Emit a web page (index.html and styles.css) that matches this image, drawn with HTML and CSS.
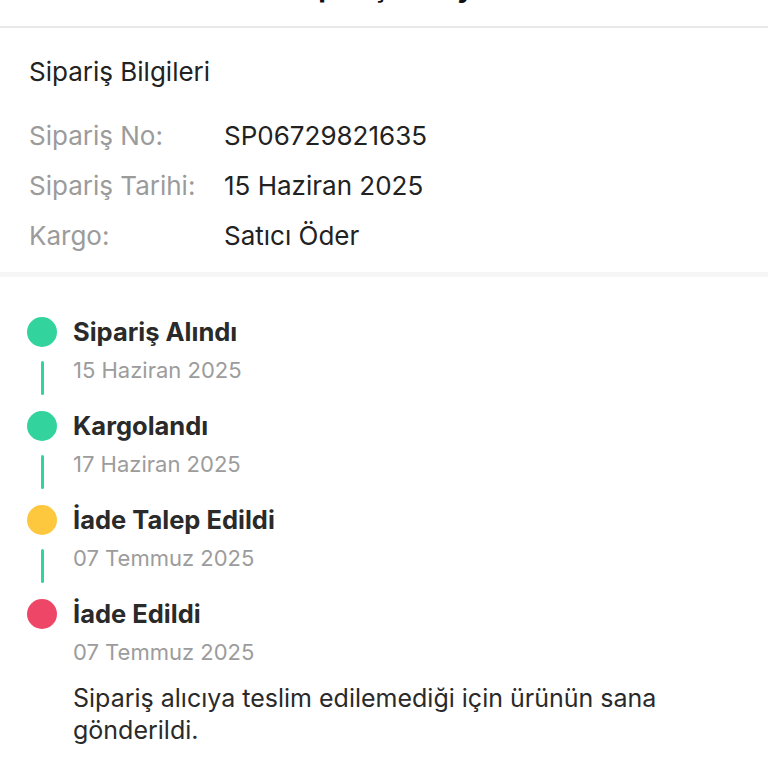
FILE: index.html
```html
<!DOCTYPE html>
<html lang="tr">
<head>
<meta charset="utf-8">
<link rel="stylesheet" href="styles.css">
</head>
<body>
<header class="topbar"><h1 class="topbar-title">Sipariş Detayı</h1></header>
<section class="info">
  <h2 class="info-title">Sipariş Bilgileri</h2>
  <div class="info-row"><span class="info-label">Sipariş No:</span><span class="info-value">SP06729821635</span></div>
  <div class="info-row"><span class="info-label">Sipariş Tarihi:</span><span class="info-value">15 Haziran 2025</span></div>
  <div class="info-row"><span class="info-label">Kargo:</span><span class="info-value">Satıcı Öder</span></div>
</section>
<section class="timeline">
  <div class="step">
    <div class="marker"><span class="dot dot-green"></span><span class="line"></span></div>
    <div class="content"><div class="step-title">Sipariş Alındı</div><div class="step-date">15 Haziran 2025</div></div>
  </div>
  <div class="step">
    <div class="marker"><span class="dot dot-green"></span><span class="line"></span></div>
    <div class="content"><div class="step-title">Kargolandı</div><div class="step-date">17 Haziran 2025</div></div>
  </div>
  <div class="step">
    <div class="marker"><span class="dot dot-yellow"></span><span class="line"></span></div>
    <div class="content"><div class="step-title">İade Talep Edildi</div><div class="step-date">07 Temmuz 2025</div></div>
  </div>
  <div class="step step-last">
    <div class="marker"><span class="dot dot-red"></span></div>
    <div class="content"><div class="step-title">İade Edildi</div><div class="step-date">07 Temmuz 2025</div>
      <p class="step-desc">Sipariş alıcıya teslim edilemediği için ürünün sana gönderildi.</p></div>
  </div>
</section>
</body>
</html>
```
FILE: styles.css
```css
* { box-sizing: border-box; }
html, body { margin: 0; padding: 0; background: #fff; }
body { font-family: Inter, "Noto Sans", sans-serif; color: #222; width: 768px; height: 768px; overflow: hidden; }

.topbar { height: 28px; display: flex; justify-content: center; align-items: flex-end; overflow: hidden; border-bottom: 2px solid #e9e9e9; }
.topbar-title { margin: 0 0 24px 6px; font-size: 28px; line-height: 30px; font-weight: 700; color: #111; white-space: nowrap; }

.info { padding: 29px 29px 12px; border-bottom: 5px solid #f6f6f6; }
.info-title { margin: 0 0 23px; height: 30px; font-size: 26px; line-height: 30px; font-weight: 400; color: #222; }
.info-row { display: flex; height: 50px; align-items: center; font-size: 26px; }
.info-label { width: 195px; color: #9b9b9b; }
.info-value { color: #222; }

.timeline { padding: 40px 29px 0 27px; }
.step { display: flex; gap: 16px; height: 94px; }
.step-last { height: auto; }
.marker { width: 30px; display: flex; flex-direction: column; align-items: center; flex: none; }
.dot { display: block; width: 30px; height: 30px; border-radius: 50%; flex: none; }
.dot-green { background: #33d39d; }
.dot-yellow { background: #fdc83e; }
.dot-red { background: #ee4667; }
.line { display: block; width: 3px; height: 34px; margin-top: 14px; border-radius: 2px; background: #33d39d; flex: none; }
.content { flex: 1; }
.step-title { height: 30px; font-size: 25.5px; line-height: 30px; font-weight: 700; color: #2a2a2a; white-space: nowrap; }
.step-date { height: 30px; margin-top: 8px; font-size: 22px; line-height: 30px; color: #9c9c9c; white-space: nowrap; }
.step-desc { margin: 15px 0 0; font-size: 25px; line-height: 32px; color: #2a2a2a; }
```
